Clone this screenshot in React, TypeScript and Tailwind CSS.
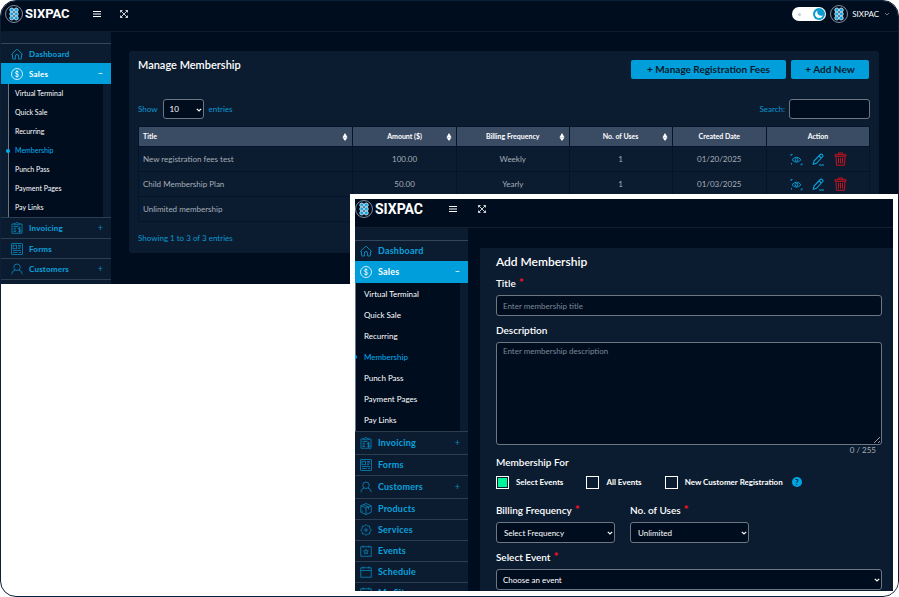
import { useId, useState } from "react";
import type { ComponentProps, ReactNode } from "react";
import { clsx } from "clsx";

type IconName =
  | "home"
  | "sales"
  | "invoice"
  | "forms"
  | "customer"
  | "box"
  | "services"
  | "events"
  | "calendar";

const iconPaths: Record<IconName, ReactNode> = {
  home: (
    <path d="M1.5 12 10.8 3.2q1.2-1.1 2.4 0L22.5 12c.6.9-.6 1.8-1.5 1.2v7.3q0 1.5-1.5 1.5h-4.2v-6q0-3-3.3-3t-3.3 3v6H4.500q-1.500 0-1.500-1.500v-7.300c-.9.6-2.100-.3-1.500-1.200Z" />
  ),
  sales: (
    <>
      <circle cx="12" cy="12" r="11" />
      <path d="M15.500 8.800q-.7-2-3.500-2t-3.300 2.400q0 2 3.300 2.700t3.500 2.800q0 2.400-3.500 2.400t-3.600-2.200M12 4.500v15" />
    </>
  ),
  invoice: (
    <>
      <path d="M7 4H2v18.500h20V4h-5M7 5.500V3h2.500q.5-2 2.500-2t2.500 2H17v2.500ZM5 9h10M5 12.500h5M5 16h5M5 19h5" />
      <path d="M19.500 12.500q-1-1.300-3-1.100-2.600.4-2.300 2.300.3 1.300 2.800 1.700 2.900.5 2.900 2.200 0 2-2.800 2.100-2.300 0-3.200-1.500M17 9.500v12" />
    </>
  ),
  forms: (
    <>
      <rect x="1" y="1" width="22" height="22" rx="1" />
      <rect x="4" y="4.500" width="7" height="7" />
      <path d="M14 5h6M14 8h6M14 11h4M4 15h16M4 19h9M16 19h4" />
    </>
  ),
  customer: (
    <>
      <circle cx="12" cy="8.500" r="6.500" />
      <path d="M1.500 22.500q.5-7.500 7-8.500M22.500 22.500q-.5-7.500-7-8.500" />
    </>
  ),
  box: (
    <>
      <path d="M12 1 22.500 5.500v13L12 23 1.500 18.500v-13ZM1.500 5.500 12 10l10.500-4.500M12 10v13M6.500 3.400 17 7.900v5" />
      <path d="M4.500 15v2.500" />
    </>
  ),
  services: (
    <>
      <path d="M12 1l3 3.200h4.500V9L23 12l-3.500 3v4.800H15L12 23l-3-3.200H4.500V15L1 12l3.500-3V4.200H9Z" />
      <path d="M12 7.500v9M7.500 12h9" />
    </>
  ),
  events: (
    <>
      <path d="M1.500 3.500h21v19h-21ZM6.500 1v4M17.500 1v4" />
      <path d="m12 8.500 1.400 3 3.300.4-2.400 2.300.6 3.300-2.900-1.600-2.900 1.600.6-3.300-2.400-2.300 3.300-.4Z" />
    </>
  ),
  calendar: <path d="M1.500 3.500h21v19h-21ZM6.500 1v4M17.500 1v4M1.500 9h21" />,
};

interface NavEntry {
  label: string;
  icon: IconName;
  expandable?: boolean;
}

const backNav: NavEntry[] = [
  { label: "Invoicing", icon: "invoice", expandable: true },
  { label: "Forms", icon: "forms" },
  { label: "Customers", icon: "customer", expandable: true },
];

const frontNav: NavEntry[] = [
  ...backNav,
  { label: "Products", icon: "box" },
  { label: "Services", icon: "services" },
  { label: "Events", icon: "events" },
  { label: "Schedule", icon: "calendar" },
  { label: "My Site", icon: "calendar" },
];

const salesLinks = [
  "Virtual Terminal",
  "Quick Sale",
  "Recurring",
  "Membership",
  "Punch Pass",
  "Payment Pages",
  "Pay Links",
];

const plans = [
  { title: "New registration fees test", amount: "100.00", frequency: "Weekly", uses: "1", created: "01/20/2025" },
  { title: "Child Membership Plan", amount: "50.00", frequency: "Yearly", uses: "1", created: "01/03/2025" },
  { title: "Unlimited membership", amount: "", frequency: "", uses: "", created: "" },
];

const columns = [
  { label: "Title", width: "w-[29.3%]", sortable: true },
  { label: "Amount ($)", width: "w-[14.2%]", sortable: true },
  { label: "Billing Frequency", width: "w-[15.4%]", sortable: true },
  { label: "No. of Uses", width: "w-[14.1%]", sortable: true },
  { label: "Created Date", width: "w-[12.9%]", sortable: false },
  { label: "Action", width: "w-[14.1%]", sortable: false },
];

const field = "rounded-[3px] border border-[#6d7784] bg-[#000d1f]";

function NavIcon({ name, className }: { name: IconName; className?: string }) {
  return (
    <svg viewBox="0 0 24 24" fill="none" stroke="currentColor" strokeWidth="1.6" className={clsx("size-3 shrink-0", className)}>
      {iconPaths[name]}
    </svg>
  );
}

function LogoMark() {
  return (
    <svg viewBox="0 0 36 36" className="size-[18px] shrink-0">
      <circle cx="18" cy="18" r="17" fill="#000d1f" stroke="#a9b8c8" strokeWidth="1.500" />
      {[10, 18, 26].map((y) => (
        <g key={y} fill="#12a5e2" stroke="#eaf7fd" strokeWidth="1.500">
          <circle cx="13.500" cy={y} r="4" />
          <circle cx="22.500" cy={y} r="4" />
        </g>
      ))}
    </svg>
  );
}

function Brand({ large }: { large?: boolean }) {
  return (
    <a href="#" className="flex items-center gap-0.5 text-white">
      <LogoMark />
      <span className={clsx("font-['Roboto',sans-serif] leading-[18px] font-bold", large ? "w-[53px] text-[14px]" : "w-[49px] text-[13px]")}>
        SIXPAC
      </span>
    </a>
  );
}

function HeaderTools() {
  return (
    <>
      <button type="button" aria-label="Toggle menu" className="text-white">
        <svg viewBox="0 0 8 8" fill="none" stroke="currentColor" strokeWidth="1.200" className="size-2">
          <path d="M0 1.500h8M0 4h8M0 6.500h8" />
        </svg>
      </button>
      <button type="button" aria-label="Full screen" className="text-white">
        <svg viewBox="0 0 8 8" fill="none" stroke="currentColor" strokeWidth="0.800" className="size-2">
          <path d="M.5 2.500v-2h2M5.500.5h2v2M7.500 5.500v2h-2M2.500 7.500h-2v-2M.5.5l7 7M7.500.5l-7 7" />
        </svg>
      </button>
    </>
  );
}

function Select({ className, wrapper, ...props }: ComponentProps<"select"> & { wrapper?: string }) {
  return (
    <span className={clsx("relative block", wrapper)}>
      <select {...props} className={clsx(field, "block w-full appearance-none text-white", className)} />
      <svg
        viewBox="0 0 6 6"
        fill="none"
        stroke="#fff"
        strokeWidth="1.200"
        className="pointer-events-none absolute top-2 right-0.5 size-1.5"
      >
        <path d="m.8 1.800 2.200 2.200 2.200-2.200" />
      </svg>
    </span>
  );
}

function Sidebar({ front, items }: { front?: boolean; items: NavEntry[] }) {
  const row = clsx("flex items-center pr-2", front ? "gap-1.5 pl-[5px]" : "gap-1.5 pl-[10px]");
  const label = clsx("grow font-bold tracking-wide", front ? "text-[9px]" : "text-[8px]");

  return (
    <nav className={clsx("shrink-0 bg-[#0c1c30] text-[#08a3df]", front ? "w-[113px] pt-3" : "w-[110px] pt-[11px]")}>
      <a href="#" className={clsx(row, "border-t border-[#34475a]", front ? "h-[21px]" : "h-5")}>
        <NavIcon name="home" />
        <span className={label}>Dashboard</span>
      </a>
      <a href="#" className={clsx(row, "bg-[#009fdb] text-white", front ? "h-[22px]" : "h-[21px]")}>
        <NavIcon name="sales" />
        <span className={label}>Sales</span>
        <span className="text-[9px]">−</span>
      </a>
      <ul
        className={clsx(
          "mr-2 border-l border-[#6d7784] bg-[#000d1f] text-white",
          front ? "pb-px text-[8px]" : "ml-[7px] text-[7px]",
        )}
      >
        {salesLinks.map((link) => (
          <li key={link} className={clsx("relative flex items-center", front ? "h-[21px] pl-2" : "h-[19px] pl-1.5")}>
            {link === "Membership" && <span className="absolute -left-[3px] size-1 rounded-full bg-[#00aeef]" />}
            <a href="#" className={clsx(link === "Membership" && "text-[#00aeef]")}>
              {link}
            </a>
          </li>
        ))}
      </ul>
      {items.map((item) => (
        <a
          key={item.label}
          href="#"
          className={clsx(
            row,
            "border-t border-[#2b3d50]",
            front ? (item.expandable ? "h-[23px]" : "h-[21px]") : item.expandable ? "h-[21px]" : "h-5",
          )}
        >
          <NavIcon name={item.icon} className="opacity-80" />
          <span className={label}>{item.label}</span>
          {item.expandable && <span className="text-[9px] opacity-80">+</span>}
        </a>
      ))}
      {!front && <div className="h-[5px] border-t border-[#2b3d50]" />}
    </nav>
  );
}

function SortIcon() {
  return (
    <svg viewBox="0 0 6 9" fill="currentColor" className="absolute top-1.5 right-1 h-2 w-1.5">
      <path d="M3 0 5.800 4.700H.2ZM.2 5h5.600L3 9Z" />
    </svg>
  );
}

function RowActions() {
  return (
    <div className="flex items-center justify-center gap-[9px] pl-0.5 text-[#08a3df]">
      <button type="button" aria-label="View">
        <svg viewBox="0 0 26 26" fill="none" stroke="currentColor" strokeWidth="1.800" className="size-[13px]">
          <path d="M4 13.500q9-10.500 18 0-9 9.500-18 0Z" />
          <circle cx="13" cy="13.500" r="2.800" />
          <path d="M2 6V3h3M21 23.500h3v-3M3 20v3" />
        </svg>
      </button>
      <button type="button" aria-label="Edit">
        <svg viewBox="0 0 26 26" fill="none" stroke="currentColor" strokeWidth="2.200" className="size-[13px]">
          <path d="M2.500 22.500 4 16 16.500 3q2-1.800 4.200.2t.3 4.300L9 20.500ZM14 5.500l4.500 4.500M14 24h10" />
        </svg>
      </button>
      <button type="button" aria-label="Delete" className="text-[#c4121f]">
        <svg viewBox="0 0 26 28" fill="none" stroke="currentColor" strokeWidth="2" className="h-3.5 w-[13px]">
          <path d="M2 5.500h22v3H2ZM8.500 5V2h9v3M4 9l1 17.500h16L22 9M9 11.500V23M13 11.500V23M17 11.500V23" />
        </svg>
      </button>
    </div>
  );
}

function MembershipList() {
  return (
    <section className="mt-[19px] mr-[19px] ml-[18px] h-[202px] grow rounded-[3px] bg-[#0c1c30] px-[9px] pt-2">
      <div className="flex h-5 items-center gap-[5px] pr-px">
        <h1 className="mb-2 grow text-[11px] font-semibold text-white">Manage Membership</h1>
        <button type="button" className="h-[19px] w-[155px] rounded-[2px] bg-[#009fdb] text-[10px] font-bold text-[#071a2c]">
          + Manage Registration Fees
        </button>
        <button type="button" className="h-[19px] w-[78px] rounded-[2px] bg-[#009fdb] text-[10px] font-bold text-[#071a2c]">
          + Add New
        </button>
      </div>
      <div className="mt-5 flex h-5 items-center justify-between text-[8px] text-[#0898d0]">
        <label className="flex items-center gap-[5px]">
          Show
          <Select wrapper="w-[41px]" className="h-5 px-1.5 text-[8px]">
            <option>10</option>
            <option>25</option>
          </Select>
          entries
        </label>
        <label className="flex items-center gap-1">
          Search:
          <input type="search" className={clsx(field, "h-5 w-[81px] px-1 text-white")} />
        </label>
      </div>
      <table className="mt-[7px] w-full table-fixed border-collapse text-[8px] text-[#a5aeb9]">
        <thead>
          <tr className="h-5 bg-[#3a4c64] text-[7px] text-white">
            {columns.map((column) => (
              <th
                key={column.label}
                className={clsx(
                  "relative border border-[#04142a] px-1 font-bold",
                  column.width,
                  column.label === "Title" ? "text-left" : "text-center",
                )}
              >
                {column.label}
                {column.sortable && <SortIcon />}
              </th>
            ))}
          </tr>
        </thead>
        <tbody>
          {plans.map((plan) => (
            <tr key={plan.title} className="h-[25px] text-center *:border *:border-[#04142a]">
              <td className="px-1 text-left">{plan.title}</td>
              <td>{plan.amount}</td>
              <td>{plan.frequency}</td>
              <td>{plan.uses}</td>
              <td>{plan.created}</td>
              <td>
                <RowActions />
              </td>
            </tr>
          ))}
        </tbody>
      </table>
      <p className="mt-2.5 text-[8px] text-[#0898d0]">Showing 1 to 3 of 3 entries</p>
    </section>
  );
}

function FieldLabel({ htmlFor, required, children }: { htmlFor: string; required?: boolean; children: ReactNode }) {
  return (
    <label htmlFor={htmlFor} className="block h-4 text-[10px] leading-4 font-semibold">
      {children}
      {required && <span className="text-[12px] font-bold text-[#ff1026]"> *</span>}
    </label>
  );
}

function CheckOption({ label, checked, onChange }: { label: string; checked: boolean; onChange: () => void }) {
  return (
    <label className="flex items-center gap-[7px]">
      <input
        type="checkbox"
        checked={checked}
        onChange={onChange}
        className="size-[13px] appearance-none border border-white p-px checked:bg-[#00f59b] checked:bg-clip-content"
      />
      {label}
    </label>
  );
}

function MembershipForm() {
  const id = useId();
  const [selected, setSelected] = useState("Select Events");
  const [description, setDescription] = useState("");

  return (
    <form className="mt-5 ml-3 grow bg-[#0c1c30] pt-1.5 pr-[11px] pl-4 text-white">
      <h2 className="text-[12px] leading-4 font-semibold">Add Membership</h2>
      <div className="mt-[5px]">
        <FieldLabel htmlFor={`${id}-title`} required>Title</FieldLabel>
        <input
          id={`${id}-title`}
          placeholder="Enter membership title"
          className={clsx(field, "mt-1 block h-[21px] w-full px-1.5 text-[8px] placeholder:text-[#7c8794]")}
        />
      </div>
      <div className="mt-1.5">
        <FieldLabel htmlFor={`${id}-description`}>Description</FieldLabel>
        <textarea
          id={`${id}-description`}
          maxLength={255}
          value={description}
          onChange={(e) => setDescription(e.target.value)}
          placeholder="Enter membership description"
          className={clsx(field, "mt-1 block h-[103px] w-full px-1.5 py-0.5 text-[8px] placeholder:text-[#7c8794]")}
        />
        <p className="mt-px mr-1.5 text-right text-[8px] leading-2 text-[#a5aeb9]">{description.length} / 255</p>
      </div>
      <fieldset>
        <legend className="text-[10px] leading-4 font-semibold">Membership For</legend>
        <div className="mt-0.5 flex h-5 items-center gap-[23px] text-[8px] font-bold">
          {["Select Events", "All Events", "New Customer Registration"].map((option) => (
            <CheckOption key={option} label={option} checked={selected === option} onChange={() => setSelected(option)} />
          ))}
          <button type="button" aria-label="Help" className="-ml-3.5 size-2.5 rounded-full bg-[#00a5e3] text-[8px] leading-[10px] font-bold text-[#0c1c30]">
            ?
          </button>
        </div>
      </fieldset>
      <div className="mt-2.5 flex gap-[15px]">
        <div>
          <FieldLabel htmlFor={`${id}-frequency`} required>Billing Frequency</FieldLabel>
          <Select id={`${id}-frequency`} wrapper="mt-1 w-[119px]" className="h-[21px] px-[7px] text-[8px]">
            <option>Select Frequency</option>
          </Select>
        </div>
        <div>
          <FieldLabel htmlFor={`${id}-uses`} required>No. of Uses</FieldLabel>
          <Select id={`${id}-uses`} wrapper="mt-1 w-[119px]" className="h-[21px] px-[7px] text-[8px]">
            <option>Unlimited</option>
          </Select>
        </div>
      </div>
      <div className="mt-1.5">
        <FieldLabel htmlFor={`${id}-event`} required>Select Event</FieldLabel>
        <Select id={`${id}-event`} wrapper="mt-1" className="h-[21px] px-1.5 text-[8px]">
          <option>Choose an event</option>
        </Select>
      </div>
    </form>
  );
}

export default function App() {
  const [dark, setDark] = useState(true);

  return (
    <div className="relative h-screen overflow-hidden rounded-2xl border border-[#0c1f38] bg-white font-['Lato',sans-serif]">
      <div className="bg-[#000d1f]">
        <header className="flex h-[31px] items-center border-b border-[#0b1a2c] pr-2 pb-1 pl-1">
          <div className="flex grow items-center gap-[19px]">
            <Brand />
            <HeaderTools />
          </div>
          <label className="mr-1 flex h-3.5 w-[34px] items-center justify-between rounded-full bg-white px-1">
            <input type="checkbox" aria-label="Dark mode" checked={dark} onChange={() => setDark(!dark)} className="sr-only" />
            <span className="ml-0.5 size-[3px] rounded-full bg-[#c9ced6]" />
            <svg viewBox="0 0 12 12" className="-mr-[3px] size-3">
              <circle cx="6" cy="6" r="6" fill="#0a9bd3" />
              <path d="M4.500 2.500A4 4 0 1 0 9.800 7.500 4 4 0 0 1 4.500 2.500Z" fill="#fff" />
            </svg>
          </label>
          <button type="button" className="flex items-center gap-1 text-[8px] text-white">
            <LogoMark />
            SIXPAC
            <svg viewBox="0 0 6 6" fill="none" stroke="#8a94a0" strokeWidth="0.800" className="ml-px size-1.5">
              <path d="m1 2 2 2 2-2" />
            </svg>
          </button>
        </header>
        <div className="flex items-start">
          <Sidebar items={backNav} />
          <MembershipList />
        </div>
      </div>

      {/* second window, stacked over the list */}
      <div className="absolute top-[193px] right-0 bottom-0 left-[38.9%] flex flex-col overflow-hidden border-[5px] border-white bg-[#000d1f]">
        <header className="flex h-[29px] shrink-0 items-center gap-[21px] border-b border-[#13212f] pb-2">
          <Brand large />
          <HeaderTools />
        </header>
        <div className="flex min-h-0 grow">
          <Sidebar front items={frontNav} />
          <MembershipForm />
        </div>
      </div>
    </div>
  );
}
